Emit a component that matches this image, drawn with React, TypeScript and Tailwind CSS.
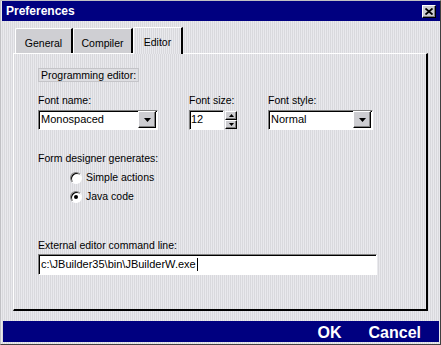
import type { ReactNode } from "react";

const stripes =
  "bg-[repeating-linear-gradient(90deg,#e9e9ed_0_1px,#d9d9dd_1px_2px)]";
const sunken =
  "border border-t-[#808080] border-l-[#808080] border-b-white border-r-white shadow-[inset_1px_1px_0_#000] bg-white";
const raised =
  "border border-t-white border-l-white border-b-black border-r-black shadow-[inset_-1px_-1px_0_#808080] bg-[#cdcdd1]";

function DownArrow() {
  return (
    <svg width="7" height="4" viewBox="0 0 7 4">
      <polygon points="0,0 7,0 3.5,4" fill="#000" />
    </svg>
  );
}

function Select({ value, width }: { value: string; width: string }) {
  return (
    <div className={`flex h-[20px] items-center ${width} ${sunken} p-[1px]`}>
      <span className="flex-1 pl-[1px] text-[11px] leading-none">{value}</span>
      <div className={`flex h-[17px] w-[18px] items-center justify-center ${raised}`}>
        <DownArrow />
      </div>
    </div>
  );
}

function Tab({ label, active, width }: { label: string; active?: boolean; width: string }) {
  if (active) {
    return (
      <div
        className={`relative z-10 -mb-px h-[27px] ${width} rounded-tl-[2px] border-l border-t border-r-2 border-l-white border-t-white border-r-black ${stripes} pt-[7px] text-center`}
      >
        {label}
      </div>
    );
  }
  return (
    <div
      className={`h-[25px] ${width} rounded-tl-[2px] border-l border-t border-r-2 border-l-white border-t-white border-r-black bg-[#cfcfd3] pt-[7px] text-center`}
    >
      {label}
    </div>
  );
}

function Radio({ label, checked }: { label: string; checked?: boolean }) {
  return (
    <div className="flex h-[16px] items-center">
      <div className="flex h-[12px] w-[12px] items-center justify-center rounded-full border border-t-[#808080] border-l-[#808080] border-b-white border-r-white bg-white shadow-[inset_1px_1px_0_#000]">
        {checked && <div className="h-[4px] w-[4px] rounded-full bg-black" />}
      </div>
      <span className="ml-[4px]">{label}</span>
    </div>
  );
}

function Label({ children }: { children: ReactNode }) {
  return <div className="h-[12px] leading-[12px]">{children}</div>;
}

export default function App() {
  return (
    <div
      className={`flex h-[345px] w-[441px] flex-col border border-t-[#c0c0c4] border-l-[#c0c0c4] border-b-[#404040] border-r-[#404040] ${stripes} font-['Liberation_Sans',Arial,sans-serif] text-[10.5px] text-black`}
    >
      <div className="ml-[1px] flex h-[20px] items-center justify-between bg-[#000080] pl-[4px] pr-[4px]">
        <span className="text-[12px] font-bold text-white">Preferences</span>
        <div className={`flex h-[13px] w-[14px] items-center justify-center ${raised}`}>
          <svg width="8" height="7" viewBox="0 0 8 7">
            <path d="M0.5 0.5 L7.5 6.5 M7.5 0.5 L0.5 6.5" stroke="#000" strokeWidth="1.8" />
          </svg>
        </div>
      </div>

      <div className="mx-[12px] mt-[6px] flex flex-col">
        <div className="flex h-[26px] items-end pl-[2px]">
          <Tab label="General" width="w-[58px]" />
          <Tab label="Compiler" width="w-[60px]" />
          <Tab label="Editor" width="w-[50px]" active />
        </div>

        <div className="h-[258px] border-l border-t border-b-2 border-r-2 border-l-white border-t-white border-b-black border-r-black pl-[24px] pt-[14px]">
          <div className="inline-block h-[14px] border border-[#c4c4c8] bg-[#dedee2] px-[2px] leading-[12px]">
            Programming editor:
          </div>

          <div className="mt-[10px] flex">
            <div className="w-[120px]">
              <Label>Font name:</Label>
              <div className="mt-[4px]">
                <Select value="Monospaced" width="w-[120px]" />
              </div>
            </div>
            <div className="ml-[31px] w-[48px]">
              <Label>Font size:</Label>
              <div className="mt-[4px] flex h-[20px]">
                <div className={`flex w-[35px] items-center ${sunken} pl-[1px] text-[11px] leading-none`}>
                  12
                </div>
                <div className="ml-[1px] mt-[1px] flex w-[12px] flex-col">
                  <div className={`flex h-[9px] items-center justify-center ${raised}`}>
                    <svg width="5" height="3" viewBox="0 0 5 3">
                      <polygon points="2.5,0 5,3 0,3" fill="#000" />
                    </svg>
                  </div>
                  <div className={`flex h-[9px] items-center justify-center ${raised}`}>
                    <svg width="5" height="3" viewBox="0 0 5 3">
                      <polygon points="0,0 5,0 2.5,3" fill="#000" />
                    </svg>
                  </div>
                </div>
              </div>
            </div>
            <div className="ml-[31px] w-[105px]">
              <Label>Font style:</Label>
              <div className="mt-[4px]">
                <Select value="Normal" width="w-[105px]" />
              </div>
            </div>
          </div>

          <div className="mt-[22px]">
            <Label>Form designer generates:</Label>
          </div>
          <div className="ml-[32px] mt-[6px] flex flex-col gap-[3px]">
            <Radio label="Simple actions" />
            <Radio label="Java code" checked />
          </div>

          <div className="mt-[34px]">
            <Label>External editor command line:</Label>
          </div>
          <div className={`mt-[3px] flex h-[21px] w-[339px] items-center ${sunken} pl-[2px] text-[11px] leading-none`}>
            <span>c:\JBuilder35\bin\JBuilderW.exe</span>
            <span className="ml-[1px] h-[13px] w-[1px] bg-black" />
          </div>
        </div>
      </div>

      <div className="ml-[2px] mr-[1px] mt-[10px] flex h-[21px] items-center justify-end gap-[27px] bg-[#000080] pr-[18px] pt-[2px] text-[16px] font-bold leading-none text-white">
        <span>OK</span>
        <span>Cancel</span>
      </div>
    </div>
  );
}
